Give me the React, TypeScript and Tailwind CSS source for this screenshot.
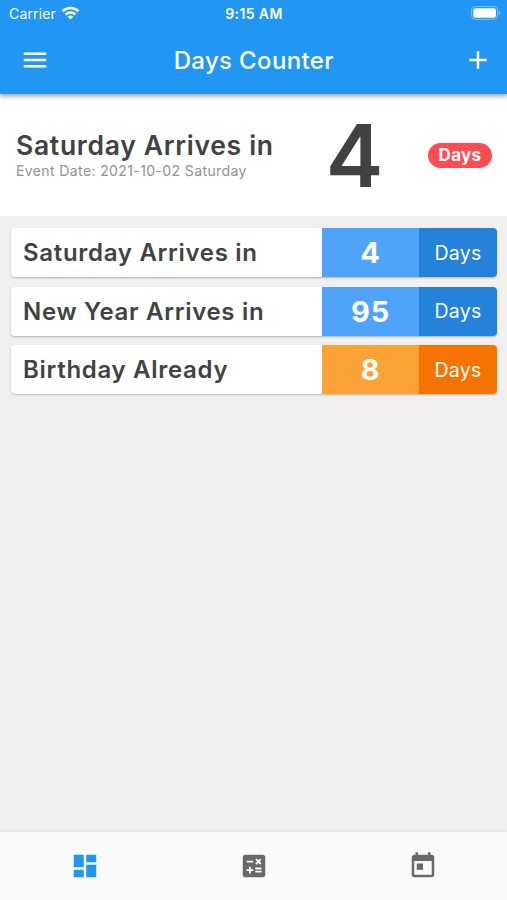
import { MdAdd, MdCalculate, MdDashboard, MdMenu, MdToday } from "react-icons/md";

type CounterEvent = {
  title: string;
  days: number;
  past?: boolean;
};

const events: CounterEvent[] = [
  { title: "Saturday Arrives in", days: 4 },
  { title: "New Year Arrives in", days: 95 },
  { title: "Birthday Already", days: 8, past: true },
];

function StatusBar() {
  return (
    <div className="grid h-[27px] grid-cols-3 items-center pl-[9px] pr-[6px] text-[14px] leading-none">
      <div className="flex items-center gap-[5px]">
        <span className="tracking-[0.15px]">Carrier</span>
        <svg aria-hidden viewBox="0 0 18 14" className="-mt-[2px] h-[14px] w-[19px]" fill="none" stroke="currentColor">
          <path d="M1 5.2a11.6 11.6 0 0 1 16 0" strokeWidth="2.6" />
          <path d="M4 8.6a7.2 7.2 0 0 1 10 0" strokeWidth="2.5" />
          <path d="M9 13.6 6.2 10.8a4 4 0 0 1 5.6 0Z" fill="currentColor" stroke="none" />
        </svg>
      </div>
      <span className="-ml-[2px] text-center font-semibold tracking-[0.4px]">9:15 AM</span>
      <svg aria-hidden viewBox="0 0 30 14" className="-mt-px h-[14px] w-[30px] justify-self-end">
        <rect x="0.6" y="0.6" width="26" height="12.8" rx="4" fill="none" stroke="white" strokeOpacity="0.4" />
        <rect x="2.2" y="2.2" width="22.8" height="9.6" rx="2.2" fill="white" />
        <path d="M28 5v4c1.6-.6 1.6-3.4 0-4Z" fill="white" fillOpacity="0.5" />
      </svg>
    </div>
  );
}

function EventRow({ title, days, past = false }: CounterEvent) {
  return (
    <li className="flex h-[49px] overflow-hidden rounded-[4px] bg-white shadow-[0_1px_2px_rgba(0,0,0,0.25)]">
      <span className="flex flex-1 items-center pl-[12px] pt-px text-[24px] font-semibold tracking-[0.7px]">
        {title}
      </span>
      <span
        className={[
          "flex w-[97px] items-center justify-center pt-px text-[29px] font-bold tracking-[0.7px] text-white",
          past ? "bg-[#fda236]" : "bg-[#4fa4f9]",
        ].join(" ")}
      >
        {days}
      </span>
      <span
        className={[
          "flex w-[78px] items-center justify-center pt-[2px] text-[19.5px] tracking-[0.2px] text-white",
          past ? "bg-[#f57400]" : "bg-[#2582db]",
        ].join(" ")}
      >
        Days
      </span>
    </li>
  );
}

export default function App() {
  return (
    <div className="flex h-[900px] w-[507px] flex-col overflow-hidden bg-[#f1f0ee] font-['Inter',sans-serif] text-[#424242]">
      <header className="z-10 h-[94px] shrink-0 bg-[#2196f3] text-white shadow-[0_2px_5px_rgba(0,0,0,0.4)]">
        <StatusBar />
        <div className="grid h-[65px] grid-cols-[1fr_auto_1fr] items-center pl-[20px] pr-[14.5px]">
          <MdMenu size={30} />
          <h1 className="-ml-[5px] pt-[2px] text-[24px] font-medium tracking-[0.35px]">Days Counter</h1>
          <MdAdd size={30} className="justify-self-end" />
        </div>
      </header>

      <section className="flex h-[122px] shrink-0 items-center bg-white pl-[16px] pr-[15px]">
        <div className="w-[290px] pt-[2px]">
          <h2 className="text-[26.5px] font-semibold leading-[30px] tracking-[0.7px]">Saturday Arrives in</h2>
          <p className="text-[14px] leading-[22px] tracking-[0.39px] text-[#929292]">
            Event Date: 2021-10-02 Saturday
          </p>
        </div>
        <span className="w-[97px] pt-[2px] text-center text-[86.5px] font-semibold leading-none">4</span>
        <span className="ml-auto flex h-[25px] w-[64px] items-center justify-center rounded-full bg-[#ff4b52] text-[17px] font-bold leading-none tracking-[0.3px] text-white">
          Days
        </span>
      </section>

      <ul className="flex flex-1 flex-col gap-[9.5px] pl-[11px] pr-[10px] pt-[12px]">
        {events.map((event) => (
          <EventRow key={event.title} {...event} />
        ))}
      </ul>

      <nav className="grid h-[68px] shrink-0 grid-cols-3 place-items-center bg-[#fafafa] text-[#696969] shadow-[0_-1px_3px_rgba(0,0,0,0.06)]">
        <MdDashboard size={30} className="text-[#2196f3]" />
        <MdCalculate size={30} />
        <MdToday size={30} />
      </nav>
    </div>
  );
}
